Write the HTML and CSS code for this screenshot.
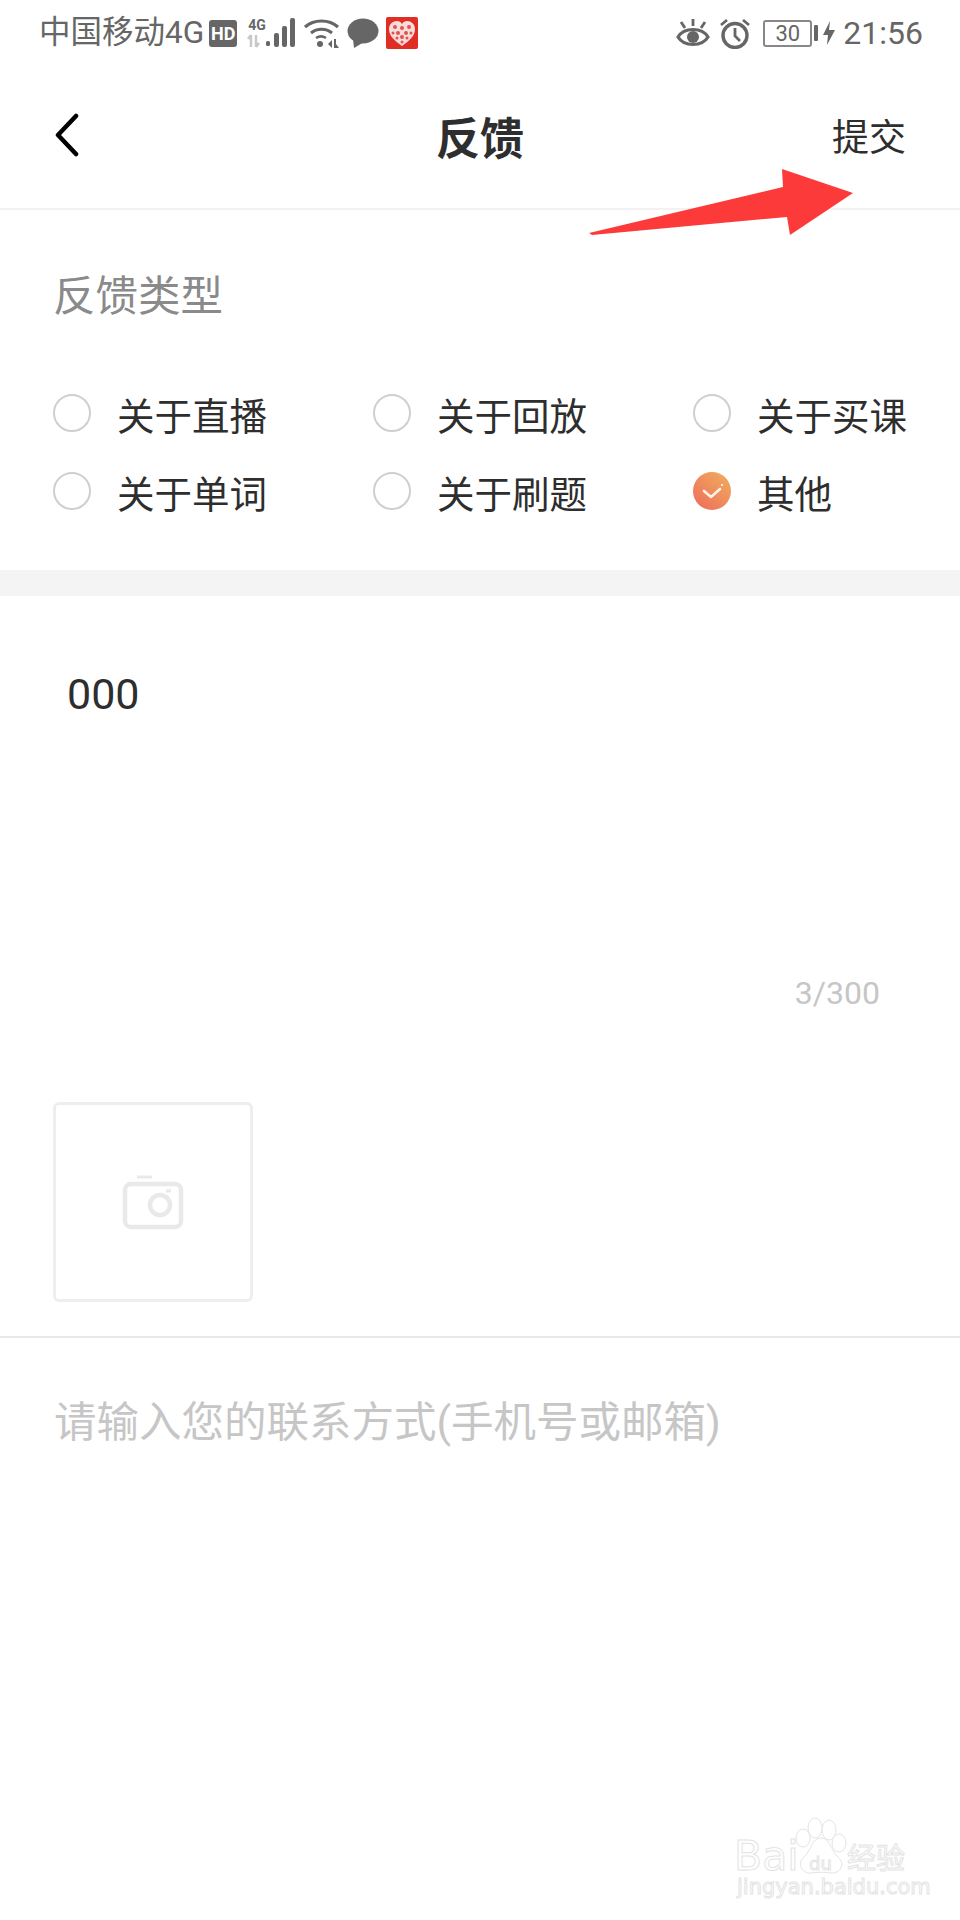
FILE: index.html
```html
<!DOCTYPE html>
<html lang="zh-CN">
<head>
    <meta charset="UTF-8">
    <meta name="viewport" content="width=device-width, initial-scale=1.0">
    <title>反馈</title>
    <link rel="stylesheet" href="styles.css">
</head>
<body>

<div class="status-bar">
    <div class="status-left">
        <span class="carrier">中国移动4G</span>
        <span class="hd-badge">HD</span>
        <div class="signal">
            <span class="signal-4g">4G</span>
            <svg class="signal-arrows" width="18" height="14" viewBox="0 0 18 14">
                <path d="M4 1v12M1 5l3-4M9 1v12M9 13l3-4" stroke="#c8c8c8" stroke-width="2.4" fill="none"/>
            </svg>
            <svg class="signal-bars" width="32" height="30" viewBox="0 0 32 30">
                <rect x="1" y="23" width="4" height="5" rx="1.5" fill="#666"/>
                <rect x="9" y="15" width="5" height="14" rx="2" fill="#666"/>
                <rect x="17" y="8" width="5" height="21" rx="2" fill="#666"/>
                <rect x="25" y="0" width="5" height="29" rx="2" fill="#666"/>
            </svg>
        </div>
        <svg class="icon-wifi" width="36" height="30" viewBox="0 0 36 30">
            <path d="M1 9C10 1 25 1 34 9" stroke="#666" stroke-width="3.2" fill="none"/>
            <path d="M7 15C13 10 22 10 28 15" stroke="#666" stroke-width="3" fill="none"/>
            <path d="M12 20C15 18 19 18 22 20" stroke="#666" stroke-width="2.6" fill="none"/>
            <circle cx="16" cy="26" r="3" fill="#666"/>
            <path d="M24 26l4-4v8zM30 21h2v9h-2zM32 26l3 4h-3z" fill="#666"/>
        </svg>
        <svg class="icon-bubble" width="32" height="30" viewBox="0 0 32 30">
            <ellipse cx="16" cy="13" rx="15.5" ry="12.5" fill="#666"/>
            <path d="M6 21L7 30L17 24z" fill="#666"/>
        </svg>
        <svg class="icon-pdd" width="32" height="32" viewBox="0 0 32 32">
            <rect width="32" height="32" rx="2" fill="#e02e24"/>
            <path d="M16 29C9 24 3 19 3 12C3 7 7 4 11 4C13 4 15 5 16 7C17 5 19 4 21 4C25 4 29 7 29 12C29 19 23 24 16 29z" fill="#f8dcdc"/>
            <g fill="#e2534b">
                <circle cx="9" cy="10" r="2"/><circle cx="16" cy="11" r="2"/><circle cx="23" cy="10" r="2"/>
                <circle cx="7" cy="16" r="1.5"/><circle cx="12" cy="16" r="2"/><circle cx="20" cy="16" r="2"/><circle cx="25" cy="16" r="1.5"/>
                <circle cx="11" cy="21" r="1.5"/><circle cx="16" cy="20" r="2"/><circle cx="21" cy="21" r="1.5"/>
                <circle cx="16" cy="25" r="1.5"/>
            </g>
        </svg>
    </div>
    <div class="status-right">
        <svg class="icon-eye" width="34" height="30" viewBox="0 0 34 30">
            <path d="M2 19C8 9 26 9 32 19C26 29 8 29 2 19z" stroke="#666" stroke-width="3.2" fill="none"/>
            <circle cx="17" cy="19" r="6" fill="#666"/>
            <path d="M17 1v7M5 4l4 6M29 4l-4 6" stroke="#666" stroke-width="2.8" fill="none"/>
        </svg>
        <svg class="icon-alarm" width="32" height="31" viewBox="0 0 32 31">
            <circle cx="16" cy="17.5" r="12" stroke="#666" stroke-width="3.4" fill="none"/>
            <path d="M16 10v8l5 5M2 7l6-5M30 7l-6-5" stroke="#666" stroke-width="2.8" fill="none"/>
        </svg>
        <div class="battery"><span>30</span></div>
        <div class="battery-nub"></div>
        <svg class="icon-bolt" width="12" height="24" viewBox="0 0 12 24">
            <path d="M7 0L0 14h5L4 24L12 9H6z" fill="#666"/>
        </svg>
        <span class="clock">21:56</span>
    </div>
</div>

<div class="nav">
    <svg class="back" width="26" height="44" viewBox="0 0 26 44">
        <path d="M22 3L4 22L22 41" stroke="#000" stroke-width="4.5" stroke-linecap="round" stroke-linejoin="round" fill="none"/>
    </svg>
    <h1 class="nav-title">反馈</h1>
    <a class="nav-submit">提交</a>
</div>

<div class="type-section">
    <div class="type-label">反馈类型</div>
    <div class="options">
        <div class="option"><span class="radio"></span>关于直播</div>
        <div class="option"><span class="radio"></span>关于回放</div>
        <div class="option"><span class="radio"></span>关于买课</div>
        <div class="option"><span class="radio"></span>关于单词</div>
        <div class="option"><span class="radio"></span>关于刷题</div>
        <div class="option">
            <span class="radio radio-checked">
                <svg width="38" height="38" viewBox="0 0 38 38">
                    <path d="M11 19l7 6l9-8" stroke="#fff3e8" stroke-width="2.6" stroke-linecap="round" stroke-linejoin="round" fill="none"/>
                    <circle cx="29" cy="13" r="1" fill="#fff"/>
                </svg>
            </span>其他
        </div>
    </div>
</div>

<div class="band"></div>

<div class="feedback">
    <div class="feedback-text">000</div>
    <div class="counter">3/300</div>
    <div class="photo-box">
        <svg width="62" height="56" viewBox="0 0 62 56">
            <rect x="3" y="10" width="56" height="43" rx="6" stroke="#e9e9e9" stroke-width="4.5" fill="none"/>
            <path d="M15 3h15" stroke="#e9e9e9" stroke-width="3"/>
            <circle cx="38" cy="31" r="10" stroke="#e9e9e9" stroke-width="4.5" fill="none"/>
            <path d="M44 17h5" stroke="#e9e9e9" stroke-width="3"/>
        </svg>
    </div>
</div>

<div class="contact">请输入您的联系方式(手机号或邮箱)</div>

<!-- red arrow drawn on top of the screenshot -->
<svg class="arrow" width="280" height="75" viewBox="580 165 280 75">
    <path d="M589 233L783 187L782 169L853 193L790 235L787 217L592 235z" fill="#fd3a3a"/>
</svg>

<div class="watermark">
    <span class="wm-bai">Bai</span>
    <svg class="paw" width="54" height="60" viewBox="0 0 54 60">
        <g stroke="#e4e4e4" stroke-width="1" fill="#fff">
            <ellipse cx="9" cy="22" rx="7" ry="9"/>
            <ellipse cx="21" cy="12" rx="7" ry="10"/>
            <ellipse cx="35" cy="14" rx="7" ry="10"/>
            <ellipse cx="45" cy="27" rx="7" ry="9"/>
            <path d="M27 22C18 22 18 33 10 41C2 48 9 58 17 57C23 56 31 56 37 57C46 58 52 48 44 41C36 33 36 22 27 22z"/>
        </g>
    </svg>
    <span class="wm-du">du</span>
    <span class="wm-jy">经验</span>
    <span class="wm-url">jingyan.baidu.com</span>
</div>

</body>
</html>
```

FILE: styles.css
```css
body {
    margin: 0;
    width: 960px;
    height: 1920px;
    position: relative;
    overflow: hidden;
    background-color: #ffffff;
    color: #2e2e2e;
    font-family: Roboto, "Noto Sans CJK SC", sans-serif;
}

.status-bar {
    display: flex;
    justify-content: space-between;
    align-items: center;
    height: 66px;
    padding: 0 37px 0 39px;
    color: #666666;
}

.status-left,
.status-right {
    display: flex;
    align-items: center;
}

.carrier {
    font-size: 31.5px;
    line-height: 40px;
}

.hd-badge {
    width: 28px;
    height: 27px;
    margin-left: 5px;
    border-radius: 3px;
    background-color: #666666;
    color: #ffffff;
    font-size: 18px;
    font-weight: 700;
    line-height: 27px;
    text-align: center;
}

.signal {
    position: relative;
    width: 50px;
    height: 30px;
    margin-left: 10px;
}

.signal-4g {
    position: absolute;
    left: 1px;
    top: -2px;
    font-size: 14px;
    font-weight: 700;
    line-height: 16px;
    transform: scaleY(1.1);
}

.signal-arrows {
    position: absolute;
    left: 0;
    top: 16px;
}

.signal-bars {
    position: absolute;
    right: 0;
    top: 0;
}

.icon-wifi {
    margin-left: 7px;
}

.icon-bubble {
    margin-left: 7px;
}

.icon-pdd {
    margin-left: 7px;
}

.icon-alarm {
    margin-left: 9px;
}

.battery {
    width: 45px;
    height: 23px;
    margin-left: 12px;
    border: 2px solid #888888;
    border-radius: 3px;
    font-size: 22px;
    line-height: 24px;
    text-align: center;
}

.battery-nub {
    width: 4px;
    height: 16px;
    margin-left: 2px;
    border-radius: 1px;
    background-color: #666666;
}

.icon-bolt {
    margin-left: 5px;
}

.clock {
    margin-left: 8px;
    font-size: 32px;
    line-height: 40px;
}

.nav {
    display: grid;
    grid-template-columns: 1fr auto 1fr;
    align-items: center;
    height: 136px;
    padding: 6px 54px 0;
    border-bottom: 2px solid #f2f2f2;
}

.back {
    margin-bottom: 10px;
}

.nav-title {
    margin: 0;
    font-size: 44px;
    font-weight: 700;
    line-height: 60px;
}

.nav-submit {
    justify-self: end;
    font-size: 37px;
    line-height: 50px;
    margin-bottom: 2px;
}

.type-section {
    height: 360px;
    box-sizing: border-box;
    padding-top: 57px;
}

.type-label {
    margin-left: 53px;
    color: #8a8a8a;
    font-size: 42.5px;
    line-height: 60px;
}

.options {
    display: grid;
    grid-template-columns: 320px 320px 1fr;
    grid-auto-rows: 78px;
    margin: 47px 0 0 53px;
}

.option {
    display: flex;
    align-items: center;
    font-size: 37.5px;
}

.radio {
    display: block;
    box-sizing: border-box;
    width: 38px;
    height: 38px;
    margin-right: 26px;
    border: 2px solid #cfcfcf;
    border-radius: 50%;
}

.radio-checked {
    border: none;
    background: linear-gradient(40deg, #ee6a5a, #f0b060);
}

.radio-checked svg {
    display: block;
}

.band {
    height: 26px;
    background-color: #f4f4f4;
}

.feedback {
    height: 742px;
    box-sizing: border-box;
    padding-top: 68px;
    border-bottom: 2px solid #e8e8e8;
}

.feedback-text {
    height: 309px;
    padding-left: 67px;
    font-size: 43px;
    line-height: 60px;
}

.counter {
    padding-right: 80px;
    color: #c6c6c6;
    font-size: 32px;
    line-height: 40px;
    text-align: right;
}

.photo-box {
    display: flex;
    align-items: center;
    justify-content: center;
    box-sizing: border-box;
    width: 200px;
    height: 200px;
    margin: 89px 0 0 53px;
    border: 3px solid #eeeeee;
    border-radius: 6px;
}

.contact {
    margin: 55px 0 0 54px;
    color: #c6c6c6;
    font-size: 42.5px;
    line-height: 60px;
}

.arrow {
    position: absolute;
    left: 580px;
    top: 165px;
}

.watermark {
    position: absolute;
    left: 730px;
    top: 1810px;
    width: 190px;
    height: 100px;
    color: #ffffff;
    -webkit-text-stroke: 1px #e4e4e4;
    font-family: "DejaVu Sans", sans-serif;
}

.watermark span {
    position: absolute;
    white-space: nowrap;
}

.paw {
    position: absolute;
    left: 64px;
    top: 6px;
}

.wm-bai {
    left: 4px;
    top: 26px;
    font-size: 41px;
    line-height: 40px;
}

.wm-du {
    left: 79px;
    top: 42px;
    font-size: 18px;
    line-height: 24px;
}

.wm-jy {
    left: 117px;
    top: 29px;
    font-family: "Noto Sans CJK SC", sans-serif;
    font-size: 29px;
    line-height: 34px;
}

.wm-url {
    left: 7px;
    top: 64px;
    font-size: 21px;
    line-height: 26px;
}
```
